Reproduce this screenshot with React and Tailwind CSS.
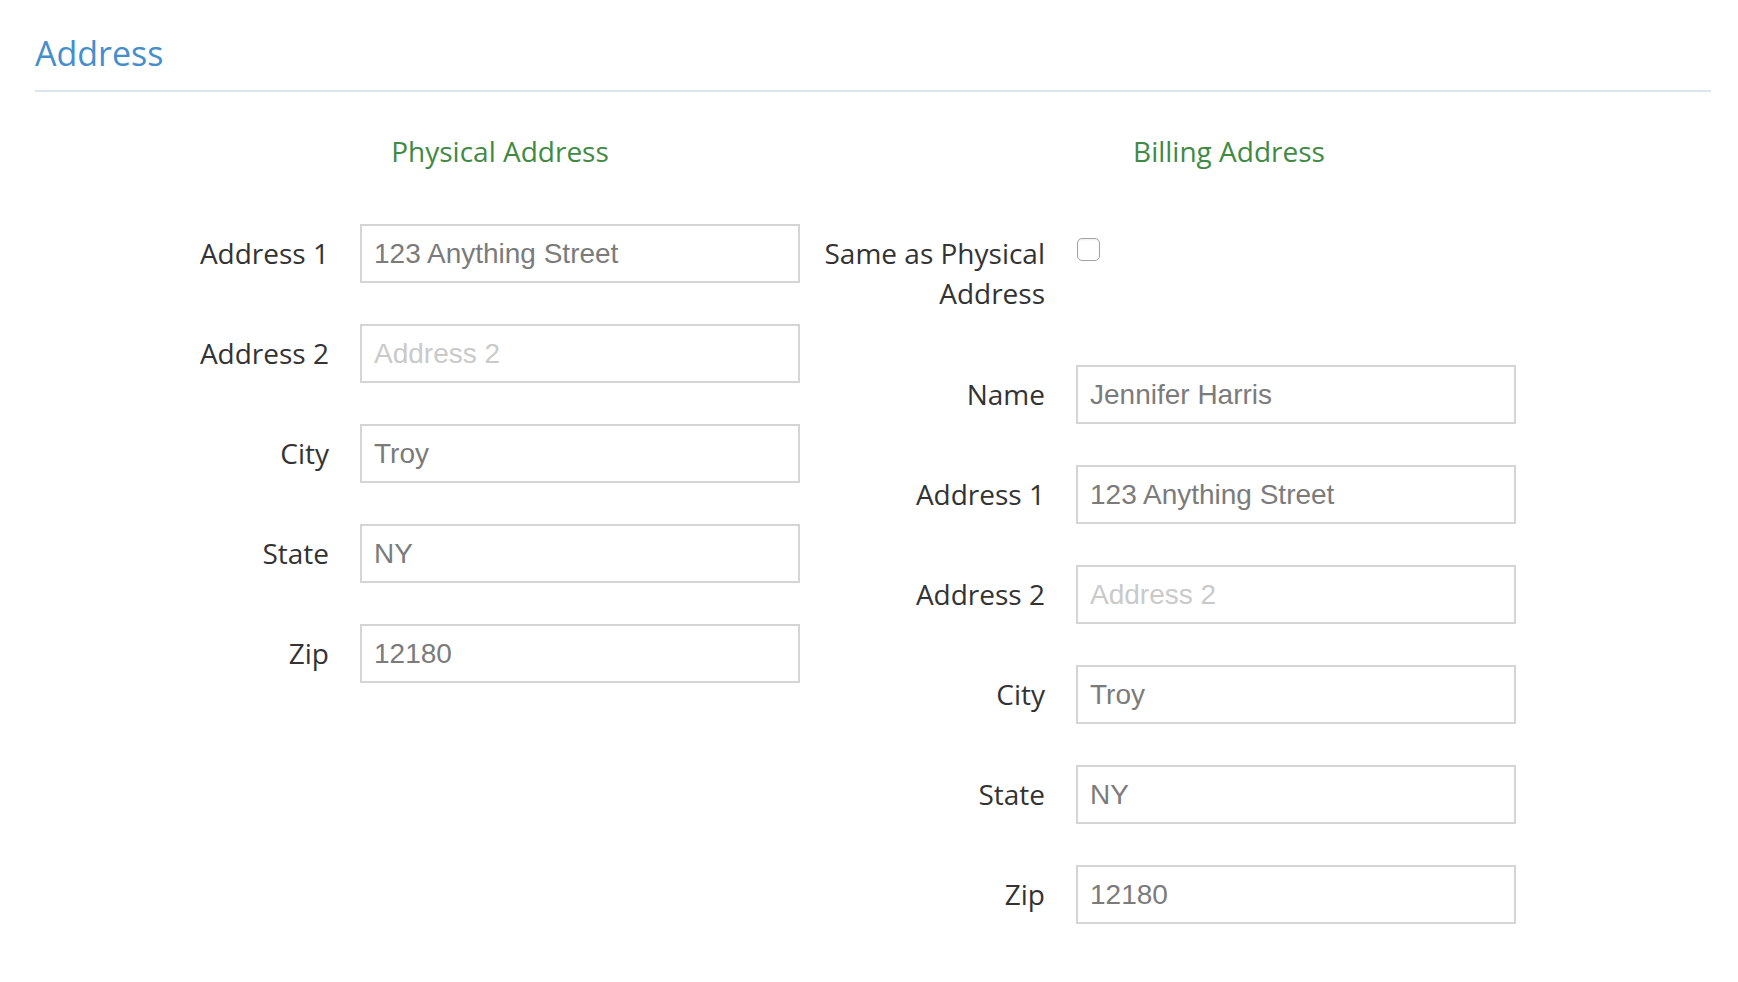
import { useState } from 'react';

const physical = [
  { label: 'Address 1', value: '123 Anything Street', placeholder: 'Address 1' },
  { label: 'Address 2', value: '', placeholder: 'Address 2' },
  { label: 'City', value: 'Troy', placeholder: 'City' },
  { label: 'State', value: 'NY', placeholder: 'State' },
  { label: 'Zip', value: '12180', placeholder: 'Zip' },
];

const billing = [
  { label: 'Name', value: 'Jennifer Harris', placeholder: 'Name' },
  ...physical,
];

const Field = ({ label, value, placeholder }) => (
  <div className="flex items-start">
    <label className="w-[244px] shrink-0 text-right pt-[9px] leading-[40px]">{label}</label>
    <input
      type="text"
      readOnly
      value={value}
      placeholder={placeholder}
      className="ml-[31px] w-[440px] h-[59px] border-2 border-[#d5d5d5] bg-white px-[12px] text-[28px] text-[#7b7b7b] placeholder:text-[#cacaca] font-['Liberation_Sans',Arial,sans-serif] outline-none"
    />
  </div>
);

const App = () => {
  const [same, setSame] = useState(false);

  return (
    <div className="min-h-screen bg-white pl-[35px] pr-[27px] pt-[33px] text-[28px] text-[#333333] font-['Open_Sans',sans-serif]">
      <h2 className="text-[34px] leading-[40px] text-[#448ecc]">Address</h2>
      <div className="mt-[17px] h-[2px] bg-[#dbe5ee]" />

      {/* section headers */}
      <div className="flex mt-[39px] leading-[40px] text-[#408a44]">
        <h4 className="w-[930px] text-center">Physical Address</h4>
        <h4 className="w-[528px] text-center">Billing Address</h4>
      </div>

      <div className="flex mt-[53px] pb-[40px]">
        {/* LEFT: physical */}
        <div className="ml-[50px] flex flex-col gap-[41px]">
          {physical.map(f => <Field key={f.label} {...f} />)}
        </div>

        {/* RIGHT: billing */}
        <div className="ml-[1px] flex flex-col gap-[41px]">
          <div className="flex items-start">
            <label className="w-[244px] shrink-0 text-right pt-[9px] pb-[11px] leading-[40px]">Same as Physical Address</label>
            <button
              type="button"
              onClick={() => setSame(!same)}
              className="ml-[32px] mt-[14px] w-[23px] h-[23px] rounded-[5px] border-[1.5px] border-[#a3a3a3] bg-white shadow-[inset_0_1px_2px_rgba(0,0,0,0.08)] flex items-center justify-center text-[16px] leading-none"
            >
              {same ? '✓' : ''}
            </button>
          </div>
          {billing.map(f => <Field key={f.label} {...f} />)}
        </div>
      </div>
    </div>
  );
};

export default App;
